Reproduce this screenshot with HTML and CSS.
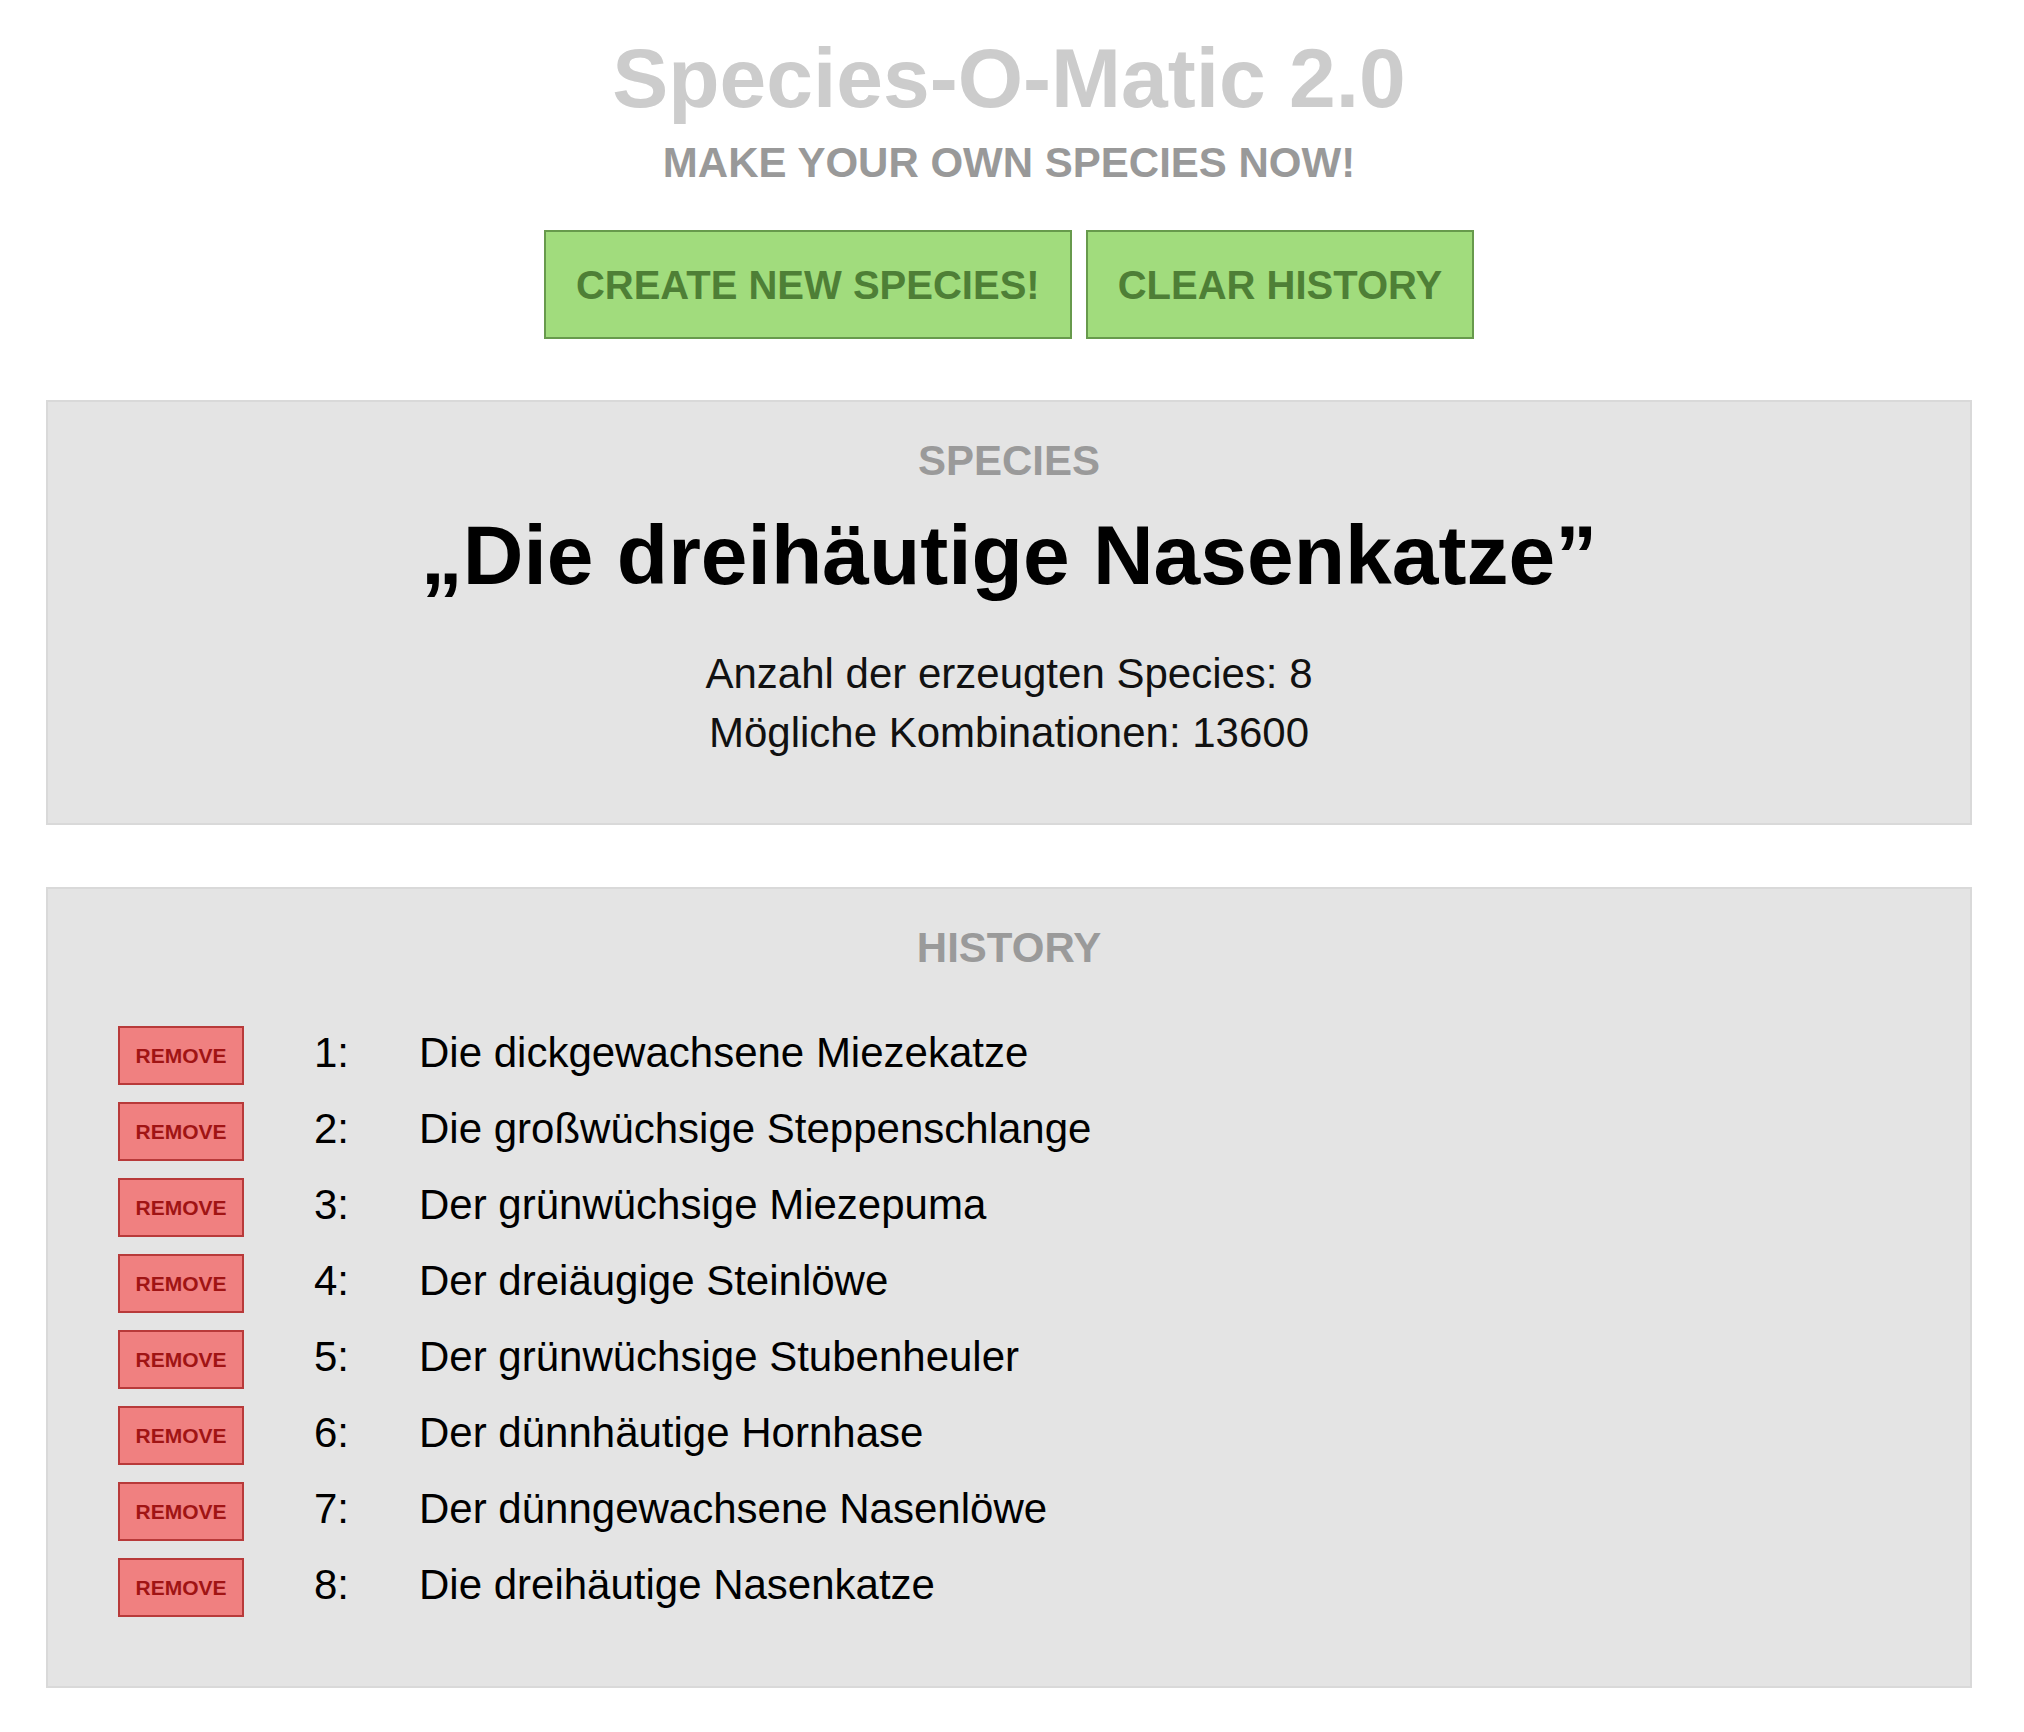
FILE: index.html
```html
<!DOCTYPE html>
<html lang="de">
<head>
<meta charset="utf-8">
<title>Species-O-Matic 2.0</title>
<link rel="stylesheet" href="styles.css">
</head>
<body>
<div class="page">
  <header class="head">
    <h1 class="title">Species-O-Matic 2.0</h1>
    <p class="subtitle">MAKE YOUR OWN SPECIES NOW!</p>
    <div class="actions">
      <button class="btn-green btn-create">CREATE NEW SPECIES!</button>
      <button class="btn-green btn-clear">CLEAR HISTORY</button>
    </div>
  </header>

  <section class="panel panel-species">
    <h2 class="panel-title">SPECIES</h2>
    <p class="species-name">„Die dreihäutige Nasenkatze”</p>
    <p class="stat stat-first">Anzahl der erzeugten Species: 8</p>
    <p class="stat">Mögliche Kombinationen: 13600</p>
  </section>

  <section class="panel panel-history">
    <h2 class="panel-title">HISTORY</h2>
    <ol class="history-list">
      <li class="row"><button class="btn-remove">REMOVE</button><span class="num">1:</span><span class="name">Die dickgewachsene Miezekatze</span></li>
      <li class="row"><button class="btn-remove">REMOVE</button><span class="num">2:</span><span class="name">Die großwüchsige Steppenschlange</span></li>
      <li class="row"><button class="btn-remove">REMOVE</button><span class="num">3:</span><span class="name">Der grünwüchsige Miezepuma</span></li>
      <li class="row"><button class="btn-remove">REMOVE</button><span class="num">4:</span><span class="name">Der dreiäugige Steinlöwe</span></li>
      <li class="row"><button class="btn-remove">REMOVE</button><span class="num">5:</span><span class="name">Der grünwüchsige Stubenheuler</span></li>
      <li class="row"><button class="btn-remove">REMOVE</button><span class="num">6:</span><span class="name">Der dünnhäutige Hornhase</span></li>
      <li class="row"><button class="btn-remove">REMOVE</button><span class="num">7:</span><span class="name">Der dünngewachsene Nasenlöwe</span></li>
      <li class="row"><button class="btn-remove">REMOVE</button><span class="num">8:</span><span class="name">Die dreihäutige Nasenkatze</span></li>
    </ol>
  </section>
</div>
</body>
</html>
```

FILE: styles.css
```css
html, body {
  margin: 0;
  padding: 0;
  background: #ffffff;
}

body {
  font-family: "Liberation Sans", Arial, Helvetica, sans-serif;
  color: #000;
}

.page {
  width: 2018px;
  padding-bottom: 44px;
}

.head {
  padding-top: 36px;
  display: flex;
  flex-direction: column;
  align-items: center;
}

.title {
  margin: 0;
  font-size: 84px;
  line-height: 84px;
  font-weight: bold;
  color: #cccccc;
}

.subtitle {
  margin: 22px 0 0;
  font-size: 42px;
  line-height: 42px;
  font-weight: bold;
  color: #999999;
}

.actions {
  margin-top: 46px;
  display: flex;
  gap: 14px;
  justify-content: center;
}

.btn-green {
  box-sizing: border-box;
  height: 109px;
  padding: 0 30px;
  border: 2px solid #679a4c;
  background: #a1dc7d;
  color: #4e7f36;
  font-family: "Liberation Sans", Arial, Helvetica, sans-serif;
  font-size: 40px;
  font-weight: bold;
  line-height: 40px;
  cursor: pointer;
}

.panel {
  margin: 0 46px;
  background: #e4e4e4;
  border: 2px solid #d9d9d9;
  box-sizing: border-box;
}

.panel-species {
  margin-top: 61px;
  padding: 38px 0 61px;
  text-align: center;
}

.panel-history {
  margin-top: 62px;
  padding: 38px 0 69px 70px;
}

.panel-title {
  margin: 0;
  font-size: 42px;
  line-height: 42px;
  font-weight: bold;
  color: #9a9a9a;
  text-align: center;
}

.panel-history .panel-title {
  margin-left: -70px;
}

.species-name {
  margin: 31px 0 0;
  font-size: 84px;
  line-height: 84px;
  font-weight: bold;
}

.stat {
  margin: 0;
  font-size: 42px;
  line-height: 59px;
  color: #111;
}

.stat-first {
  margin-top: 47px;
}

.history-list {
  list-style: none;
  margin: 57px 0 0;
  padding: 0;
  display: flex;
  flex-direction: column;
  gap: 17px;
}

.row {
  display: grid;
  grid-template-columns: 126px 175px auto;
  align-items: center;
  height: 59px;
  font-size: 42px;
  line-height: 42px;
}

.row .num {
  padding-left: 70px;
}

.row .num,
.row .name {
  position: relative;
  top: -3px;
}

.btn-remove {
  box-sizing: border-box;
  width: 126px;
  height: 59px;
  padding: 0;
  border: 2px solid #b83a3a;
  background: #f08080;
  color: #a01414;
  font-family: "Liberation Sans", Arial, Helvetica, sans-serif;
  font-size: 21px;
  font-weight: bold;
  line-height: 21px;
  cursor: pointer;
}
```
